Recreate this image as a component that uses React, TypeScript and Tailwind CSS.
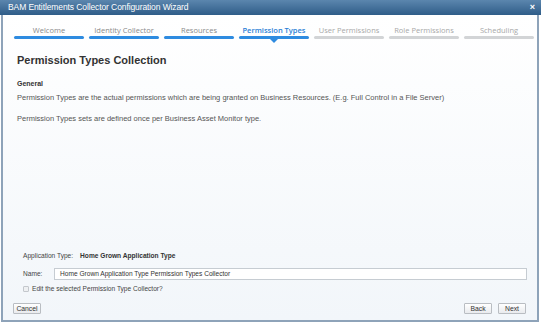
import React from "react";

type Step = { label: string; state: "done" | "active" | "todo" };

const steps: Step[] = [
  { label: "Welcome", state: "done" },
  { label: "Identity Collector", state: "done" },
  { label: "Resources", state: "done" },
  { label: "Permission Types", state: "active" },
  { label: "User Permissions", state: "todo" },
  { label: "Role Permissions", state: "todo" },
  { label: "Scheduling", state: "todo" },
];

function Stepper() {
  return (
    <div className="flex gap-[5px] pl-[11px] pt-[10px]">
      {steps.map((s) => (
        <div key={s.label} className="relative flex w-[70px] flex-col items-center">
          <span
            className={
              "h-[10px] text-[7.5px] leading-[10px] whitespace-nowrap font-['Open_Sans',sans-serif] " +
              (s.state === "active"
                ? "font-semibold text-[#2a80d6]"
                : s.state === "done"
                  ? "font-medium text-[#8a8a8a]"
                  : "font-medium text-[#a8a8a8]")
            }
          >
            {s.label}
          </span>
          <div
            className={
              "mt-[1px] h-[3px] w-full rounded-full " +
              (s.state === "todo" ? "bg-[#d2d4d6]" : "bg-[#2e8be0]")
            }
          />
          {s.state === "active" && (
            <div className="h-0 w-0 border-x-[4px] border-t-[4px] border-x-transparent border-t-[#2e8be0]" />
          )}
        </div>
      ))}
    </div>
  );
}

function Btn({ children }: { children: React.ReactNode }) {
  return (
    <button className="h-[11px] w-[28px] rounded-[1px] border border-[#b9bdc2] bg-gradient-to-b from-white to-[#e9ebee] text-[6.8px] leading-[9px] text-[#333]">
      {children}
    </button>
  );
}

export default function App() {
  return (
    <div className="flex h-[324px] w-[541px] flex-col bg-white font-['Liberation_Sans',Arial,sans-serif]">
      {/* title bar */}
      <div className="flex h-[15px] items-center justify-between bg-gradient-to-b from-[#5b86ae] to-[#2f5d88] pl-[8px] pr-[6px]">
        <span className="text-[8.5px] tracking-[-0.1px] text-white">
          BAM Entitlements Collector Configuration Wizard
        </span>
        <span className="text-[9px] font-bold leading-none text-white">×</span>
      </div>

      {/* body */}
      <div className="mb-[2px] ml-[1px] mr-[2px] flex flex-1 flex-col border-x-2 border-b-2 border-[#8ea3b9] bg-gradient-to-b from-white to-[#f2f6fa]">
        <Stepper />

        <div className="px-[14px] pt-[10px]">
          <h1 className="text-[11px] font-bold leading-[14px] text-[#333]">
            Permission Types Collection
          </h1>
          <div className="mt-[12px] text-[7px] font-bold leading-[9px] text-[#333]">General</div>
          <p className="mt-[5px] text-[7.5px] leading-[10px] text-[#555]">
            Permission Types are the actual permissions which are being granted on Business Resources. (E.g. Full Control in a File Server)
          </p>
          <p className="mt-[11px] text-[7.5px] leading-[10px] text-[#555]">
            Permission Types sets are defined once per Business Asset Monitor type.
          </p>
        </div>

        <div className="flex-1" />

        <div className="pl-[20px] pr-[10px] text-[6.6px] text-[#444]">
          <div className="flex items-center gap-[7px] leading-[10px]">
            <span>Application Type:</span>
            <span className="font-bold text-[#333]">Home Grown Application Type</span>
          </div>
          <div className="mt-[7px] flex items-center">
            <span className="w-[31px]">Name:</span>
            <div className="flex h-[12px] flex-1 items-center border border-[#c6ccd2] bg-white pl-[5px] text-[#333]">
              Home Grown Application Type Permission Types Collector
            </div>
          </div>
          <label className="mt-[4px] flex items-center gap-[3px]">
            <span className="h-[6px] w-[6px] rounded-[1px] border border-[#c3c7cc] bg-[#eef0f2]" />
            <span>Edit the selected Permission Type Collector?</span>
          </label>
        </div>

        <div className="flex items-center justify-between pb-[6px] pl-[10px] pr-[11px] pt-[9px]">
          <Btn>Cancel</Btn>
          <div className="flex gap-[6px]">
            <Btn>Back</Btn>
            <Btn>Next</Btn>
          </div>
        </div>
      </div>
    </div>
  );
}
